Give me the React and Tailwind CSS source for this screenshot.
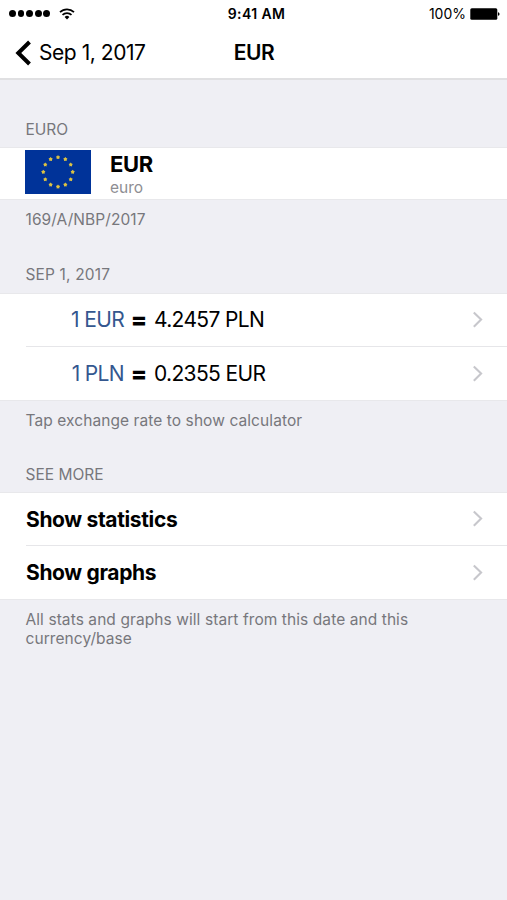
import { clsx } from 'clsx';

const rates = [
  { base: '1 EUR', value: '4.2457 PLN' },
  { base: '1 PLN', value: '0.2355 EUR' },
];

const links = ['Show statistics', 'Show graphs'];

function Chevron() {
  return (
    <svg className="h-[18px] w-[12px] shrink-0" viewBox="0 0 12 18" fill="none">
      <path d="M1.8 1.4 9.1 8.6 1.8 15.8" stroke="#c7c7cc" strokeWidth="2.1" />
    </svg>
  );
}

function starPoints(cx, cy, r) {
  return Array.from({ length: 10 }, (_, i) => {
    const angle = (i * Math.PI) / 5;
    const radius = i % 2 ? r * 0.65 : r;
    return `${cx + radius * Math.sin(angle)},${cy - radius * Math.cos(angle)}`;
  }).join(' ');
}

function EuroFlag() {
  return (
    <svg className="h-[44px] w-[66px] shrink-0" viewBox="0 0 66 44">
      <rect width="66" height="44" fill="#003399" />
      {Array.from({ length: 12 }, (_, i) => {
        const angle = (i * Math.PI) / 6;
        return (
          <polygon
            key={i}
            points={starPoints(33 + 14.7 * Math.sin(angle), 22 - 14.7 * Math.cos(angle), 2.2)}
            fill="#dcc243"
          />
        );
      })}
    </svg>
  );
}

function StatusBar() {
  return (
    <div className="grid h-[27px] grid-cols-3 items-center pr-[7px] pl-[9px]">
      <div className="flex items-center">
        <div className="flex gap-[1.8px]">
          {[0, 1, 2, 3, 4].map((dot) => (
            <span key={dot} className="h-[6.8px] w-[6.8px] rounded-full bg-black" />
          ))}
        </div>
        <svg className="ml-[9px] h-[12px] w-[16px]" viewBox="0 0 16 12" fill="none">
          <path d="M1 4.2a10 10 0 0 1 14 0" stroke="#000" strokeWidth="1.7" />
          <path d="M3.5 6.9a6.4 6.4 0 0 1 9 0" stroke="#000" strokeWidth="1.7" />
          <path d="M8 11.5 5.6 9a3.4 3.4 0 0 1 4.8 0Z" fill="#000" />
        </svg>
      </div>
      <span className="pl-[4px] text-center text-[14px] font-semibold tracking-[0.4px]">9:41 AM</span>
      <div className="flex items-center justify-end gap-[4px]">
        <span className="text-[14px]">100%</span>
        <svg className="h-[12px] w-[30px]" viewBox="0 0 30 12">
          <rect x="0.3" y="0.3" width="27" height="11.4" rx="1.5" />
          <path d="M28 4.2c2 .4 2 3.2 0 3.6Z" />
        </svg>
      </div>
    </div>
  );
}

function NavBar() {
  return (
    <div className="grid h-[51px] grid-cols-3 items-center">
      <button className="flex items-center pl-[15px] text-[21px] tracking-[-0.45px] whitespace-nowrap">
        <svg className="mr-[7px] h-[26px] w-[17px]" viewBox="0 0 17 26" fill="none">
          <path d="M14.5 2 3.3 13l11.2 11" stroke="#000" strokeWidth="4" />
        </svg>
        Sep 1, 2017
      </button>
      <h1 className="pl-px text-center text-[21px] font-semibold tracking-[-0.5px]">EUR</h1>
    </div>
  );
}

function SectionTitle({ className, children }) {
  return (
    <h2 className={clsx('flex items-end pl-[25.5px] text-[15.5px] leading-[20px] text-[#77777c]', className)}>
      {children}
    </h2>
  );
}

function SectionNote({ children }) {
  return (
    <p className="pt-[10px] pl-[25.5px] text-[15.5px] leading-[19px] tracking-[0.08px] text-[#77777c]">{children}</p>
  );
}

function Rows({ children }) {
  return <div className="border-y border-[#e8e8eb] bg-white">{children}</div>;
}

function Row({ first, children }) {
  return (
    <div className="pl-[26px]">
      <div
        className={clsx(
          'flex h-[53px] items-center justify-between pr-[23px]',
          first && 'border-b border-[#e6e6e9]',
        )}
      >
        {children}
        <Chevron />
      </div>
    </div>
  );
}

export default function App() {
  return (
    <div className="h-[900px] w-[507px] overflow-hidden bg-[#efeff4] font-['Inter','Liberation_Sans',sans-serif] text-black">
      <header className="h-[80px] border-b-2 border-[#e0e0e2] bg-white">
        <StatusBar />
        <NavBar />
      </header>

      <section className="h-[157px]">
        <SectionTitle className="h-[67px] pb-[7px]">EURO</SectionTitle>
        <Rows>
          <div className="flex h-[51px] pl-[25px]">
            <div className="pt-[2px]">
              <EuroFlag />
            </div>
            <div className="ml-[19px] pt-[4px]">
              <p className="text-[22px] leading-[25px] font-bold tracking-[-0.3px]">EUR</p>
              <p className="text-[15.5px] leading-[21px] text-[#8e8e93]">euro</p>
            </div>
          </div>
        </Rows>
        <SectionNote>169/A/NBP/2017</SectionNote>
      </section>

      <section className="h-[200px]">
        <SectionTitle className="h-[56px] pb-[8px] tracking-[0.15px]">SEP 1, 2017</SectionTitle>
        <Rows>
          {rates.map(({ base, value }, i) => (
            <Row key={base} first={i === 0}>
              <div className="flex items-center text-[21px] tracking-[-0.65px]">
                <span className="w-[98px] text-right text-[#34578f]">{base}</span>
                <span className="w-[30px] text-center text-[24px] font-extrabold tracking-normal">=</span>
                <span>{value}</span>
              </div>
            </Row>
          ))}
        </Rows>
        <SectionNote>Tap exchange rate to show calculator</SectionNote>
      </section>

      <section>
        <SectionTitle className="h-[55px] pb-[7px]">SEE MORE</SectionTitle>
        <Rows>
          {links.map((label, i) => (
            <Row key={label} first={i === 0}>
              <span className="pt-px text-[21px] font-bold tracking-[-0.35px]">{label}</span>
            </Row>
          ))}
        </Rows>
        <SectionNote>
          All stats and graphs will start from this date and this
          <br />
          currency/base
        </SectionNote>
      </section>
    </div>
  );
}
